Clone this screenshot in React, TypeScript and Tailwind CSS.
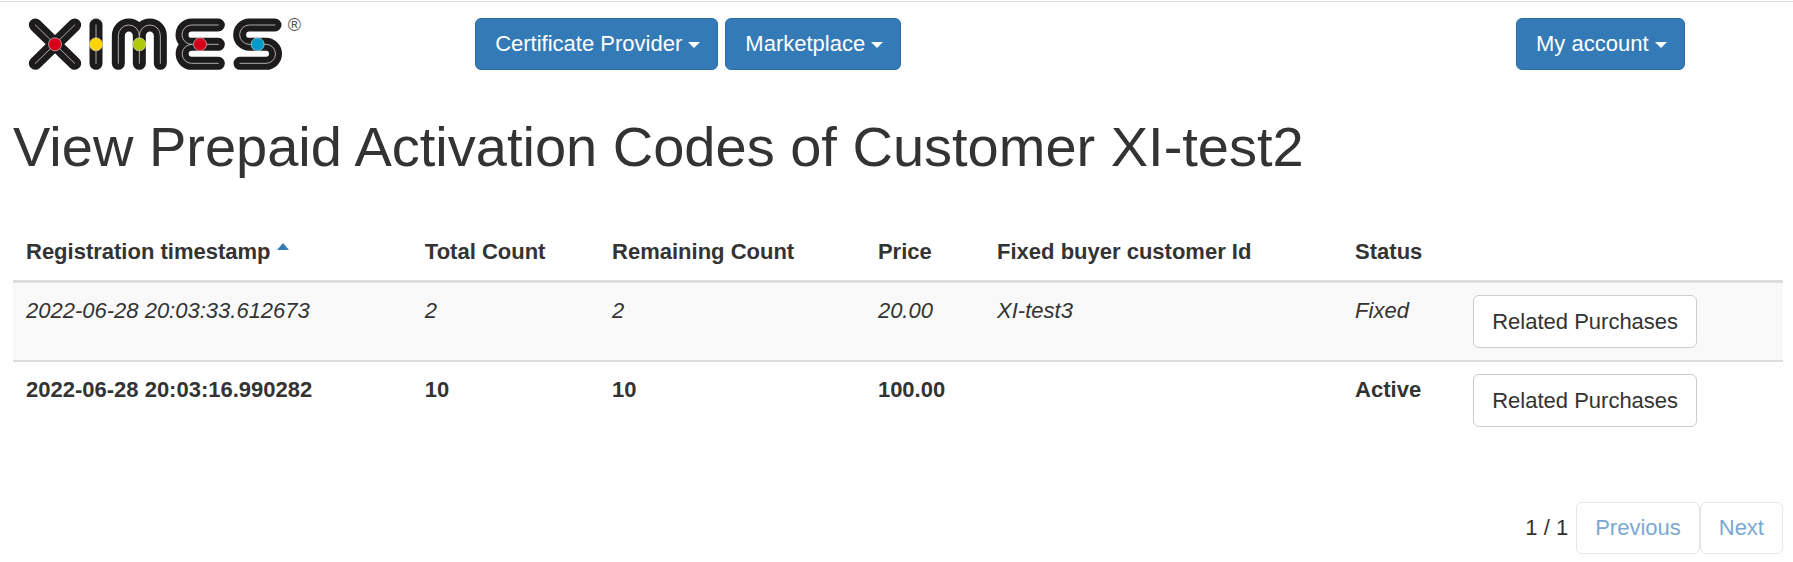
import type { ReactNode } from 'react';

interface CodeRow {
  timestamp: string;
  total: number;
  remaining: number;
  price: string;
  buyer: string;
  status: string;
  active: boolean;
}

const columns = [
  'Registration timestamp',
  'Total Count',
  'Remaining Count',
  'Price',
  'Fixed buyer customer Id',
  'Status',
];

const rows: CodeRow[] = [
  { timestamp: '2022-06-28 20:03:33.612673', total: 2, remaining: 2, price: '20.00', buyer: 'XI-test3', status: 'Fixed', active: false },
  { timestamp: '2022-06-28 20:03:16.990282', total: 10, remaining: 10, price: '100.00', buyer: '', status: 'Active', active: true },
];

const letters = [
  'M106 75 L224 190 M224 75 L106 190',
  'M288 75 V190',
  'M355 190 V107 a31.5 32 0 0 1 63 0 V190 M418 107 a31.5 32 0 0 1 63 0 V190',
  'M655 75 H575 a29 29 0 0 0 0 58 H655 M575 133 a28.5 28.5 0 0 0 0 57 H655',
  'M825 75 H748 a29 29 0 0 0 0 58 H798 a28.5 28.5 0 0 1 0 57 H720',
];

const dots = [
  { cx: 165, fill: '#d6001c' },
  { cx: 288, fill: '#ffd500' },
  { cx: 418, fill: '#afca0b' },
  { cx: 600, fill: '#d6001c' },
  { cx: 773, fill: '#009bcb' },
];

function Logo() {
  return (
    <svg viewBox="84 51 840 162" className="block h-[54px] w-[280px] overflow-visible" role="img" aria-label="XIMES">
      {letters.map((d) => (
        <g key={d} fill="none" strokeLinecap="round">
          <path d={d} stroke="#1d1b1c" strokeWidth={39} />
          <path d={d} stroke="#c4c4c4" strokeWidth={2.6} />
        </g>
      ))}
      {dots.map((dot) => (
        <circle key={dot.cx} cx={dot.cx} cy={133} r={19.5} fill={dot.fill} stroke="#d8d0c8" strokeWidth={2} />
      ))}
      <text x={863} y={93} fontSize={54} fill="#555" fontFamily="Liberation Sans, sans-serif">®</text>
    </svg>
  );
}

function MenuButton({ children }: { children: ReactNode }) {
  return (
    <button
      type="button"
      className="h-[52px] whitespace-nowrap rounded-md border border-[#2e6da4] bg-[#337ab7] pr-[17px] pb-0.5 pl-[19px] text-white"
    >
      {children}{' '}
      <span className="inline-block border-x-6 border-t-6 border-x-transparent border-t-white align-middle" />
    </button>
  );
}

function PageButton({ children }: { children: ReactNode }) {
  return (
    <button
      type="button"
      disabled
      className="h-[52px] rounded-md border border-[#e6e6e6] bg-white px-[18px] pb-0.5 text-[#7aa9d3]"
    >
      {children}
    </button>
  );
}

export default function App() {
  return (
    <div className="mt-px border-t border-[#ddd] bg-white font-['Liberation_Sans',Arial,sans-serif] text-[22px] leading-[31px] text-[#333]">
      <header className="grid grid-cols-[26.5%_1fr_277px] pt-4">
        <a href="#" className="-mt-px pl-7">
          <Logo />
        </a>
        <nav className="flex gap-[7px]">
          <MenuButton>Certificate Provider</MenuButton>
          <MenuButton>Marketplace</MenuButton>
        </nav>
        <div>
          <MenuButton>My account</MenuButton>
        </div>
      </header>

      <main className="pr-[10px] pl-[13px]">
        <h1 className="mt-[45px] mb-[46px] text-[56px] leading-[62px]">View Prepaid Activation Codes of Customer XI-test2</h1>

        <table className="w-full border-collapse text-left">
          <thead>
            <tr className="border-b-3 border-[#ddd]">
              {columns.map((name, i) => (
                <th key={name} className="whitespace-nowrap px-[13px] pt-3 pb-[13px] font-bold">
                  {name}
                  {i === 0 && (
                    <>
                      {' '}
                      <span className="mb-[9px] inline-block border-x-6 border-b-7 border-x-transparent border-b-[#337ab7]" />
                    </>
                  )}
                </th>
              ))}
              <td />
            </tr>
          </thead>
          <tbody>
            {rows.map((row) => (
              <tr
                key={row.timestamp}
                className={row.active ? 'border-t-2 border-[#ddd] align-top font-bold' : 'bg-[#f9f9f9] align-top italic'}
              >
                <td className="px-[13px] py-3">{row.timestamp}</td>
                <td className="px-[13px] py-3">{row.total}</td>
                <td className="px-[13px] py-3">{row.remaining}</td>
                <td className="px-[13px] py-3">{row.price}</td>
                <td className="px-[13px] py-3">{row.buyer}</td>
                <td className="px-[13px] py-3">{row.status}</td>
                <td className="py-3 pr-4 pl-3">
                  <button
                    type="button"
                    className="block h-[53px] whitespace-nowrap rounded-md border border-[#ccc] bg-white px-[18px] font-normal not-italic"
                  >
                    Related Purchases
                  </button>
                </td>
              </tr>
            ))}
          </tbody>
        </table>

        <div className="mt-[63px] flex items-center justify-end pb-[6px]">
          <span className="mr-2 pb-0.5">1 / 1</span>
          <PageButton>Previous</PageButton>
          <PageButton>Next</PageButton>
        </div>
      </main>
    </div>
  );
}
